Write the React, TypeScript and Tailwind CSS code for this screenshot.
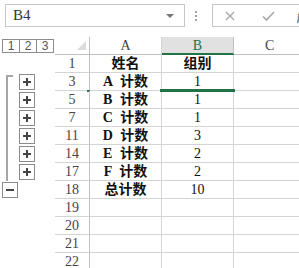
const GREEN = '#217346';

type Row = {
  n: string;
  a?: string;
  b?: string;
  bold?: boolean;
  outline?: 'top' | 'plus' | 'minus';
  selected?: boolean;
};

const rows: Row[] = [
  { n: '1', a: '姓名', b: '组别', bold: true },
  { n: '3', a: 'A 计数', b: '1', outline: 'top', selected: true },
  { n: '5', a: 'B 计数', b: '1', outline: 'plus' },
  { n: '7', a: 'C 计数', b: '1', outline: 'plus' },
  { n: '11', a: 'D 计数', b: '3', outline: 'plus' },
  { n: '14', a: 'E 计数', b: '2', outline: 'plus' },
  { n: '17', a: 'F 计数', b: '2', outline: 'plus' },
  { n: '18', a: '总计数', b: '10', outline: 'minus' },
  { n: '19' },
  { n: '20' },
  { n: '21' },
  { n: '22' },
];

function PlusBox() {
  return (
    <div className="relative mt-px w-[16px] h-[16px] border border-[#8c8c8c] bg-white flex items-center justify-center">
      <div className="absolute w-[8px] h-[2px] bg-[#444]" />
      <div className="absolute w-[2px] h-[8px] bg-[#444]" />
    </div>
  );
}

function OutlineCell({ kind }: { kind?: Row['outline'] }) {
  if (kind === 'top') {
    return (
      <div className="w-[55px] flex items-start">
        <div className="self-stretch ml-[6px] mt-[2px] w-[7px] border-l-2 border-t-2 border-[#a6a6a6]" />
        <div className="ml-[6px]">
          <PlusBox />
        </div>
      </div>
    );
  }
  if (kind === 'plus') {
    return (
      <div className="w-[55px] flex items-start">
        <div className="self-stretch ml-[6px] w-[2px] bg-[#a6a6a6]" />
        <div className="ml-[11px]">
          <PlusBox />
        </div>
      </div>
    );
  }
  if (kind === 'minus') {
    return (
      <div className="w-[55px] flex items-start">
        <div className="ml-[2px] mt-px w-[16px] h-[16px] border border-[#8c8c8c] bg-white flex items-center justify-center">
          <div className="w-[8px] h-[2px] bg-[#444]" />
        </div>
      </div>
    );
  }
  return <div className="w-[55px]" />;
}

export default function App() {
  return (
    <div
      className="relative w-[299px] h-[268px] overflow-hidden bg-white text-[#111]"
      style={{ fontFamily: '"Liberation Serif", "Noto Sans CJK SC", serif' }}
    >
      {/* Formula bar */}
      <div className="h-[37px] flex items-start pt-[4px]">
        <div className="ml-[5px] w-[180px] h-[23px] shrink-0 border border-[#c6c6c6] flex items-center pl-[7px] pr-[10px]">
          <span className="text-[15px] text-[#333]">B4</span>
          <div className="ml-auto w-0 h-0 border-l-[4px] border-r-[4px] border-t-[4px] border-l-transparent border-r-transparent border-t-[#777]" />
        </div>
        <div className="ml-[10px] mt-[7px] flex flex-col gap-[2px]">
          <div className="w-[2px] h-[2px] bg-[#a0a0a0]" />
          <div className="w-[2px] h-[2px] bg-[#a0a0a0]" />
          <div className="w-[2px] h-[2px] bg-[#a0a0a0]" />
        </div>
        <div className="ml-[15px] h-[23px] flex-1 min-w-0 border border-r-0 border-[#c6c6c6] flex items-center overflow-hidden">
          <svg className="ml-[12px] shrink-0" width="10" height="10" viewBox="0 0 10 10">
            <path d="M1 1L9 9M9 1L1 9" stroke="#a6a6a6" strokeWidth="1.3" fill="none" />
          </svg>
          <svg className="ml-[27px] shrink-0" width="13" height="10" viewBox="0 0 13 10">
            <path d="M1 5.5L4.5 9L12 1" stroke="#a6a6a6" strokeWidth="1.6" fill="none" />
          </svg>
          <span className="ml-[22px] shrink-0 text-[13px] italic text-[#555]">fx</span>
        </div>
      </div>

      {/* Column headers */}
      <div className="flex h-[18px]">
        <div className="w-[55px] pl-[2px] pt-[2px]">
          <div
            className="flex w-[52px] h-[14px] border border-[#8c8c8c] text-[12px] text-[#555] leading-none"
            style={{ fontFamily: '"Liberation Sans", sans-serif' }}
          >
            <div className="w-[16px] flex items-center justify-center">1</div>
            <div className="w-[17px] border-l border-[#8c8c8c] flex items-center justify-center">2</div>
            <div className="w-[17px] border-l border-[#8c8c8c] flex items-center justify-center">3</div>
          </div>
        </div>
        <div className="relative w-[35px] border-r border-b border-[#c0c0c0]">
          <div className="absolute right-[3px] bottom-[4px] w-0 h-0 border-l-[9px] border-b-[9px] border-l-transparent border-b-[#dcdcdc]" />
        </div>
        <div className="w-[72px] border-r border-b border-[#d4d4d4] border-b-[#c0c0c0] flex items-center justify-center text-[14px] text-[#444]">A</div>
        <div className="w-[72px] bg-[#e1e1e1] border-r border-[#c0c0c0] border-b-2 border-b-[#217346] flex items-center justify-center text-[14px] text-[#217346]">B</div>
        <div className="flex-1 border-b border-[#c0c0c0] flex items-center pl-[31px] text-[14px] text-[#444]">C</div>
      </div>

      {/* Rows */}
      {rows.map((r) => (
        <div key={r.n} className="flex h-[18px]">
          <OutlineCell kind={r.outline} />
          <div className="relative w-[35px] border-r border-b border-[#d4d4d4] border-r-[#c0c0c0] flex items-center justify-center text-[14px] text-[#444]">
            {r.n}
            {r.selected && <div className="absolute right-[-1px] bottom-[-2px] w-[3px] h-[2px] bg-[#217346]" />}
          </div>
          <div className={`w-[72px] border-r border-b border-[#d4d4d4] flex items-center justify-center text-[14px] [word-spacing:4px] ${r.a ? 'font-bold' : ''}`}>
            {r.a}
          </div>
          <div className={`relative w-[72px] border-r border-b border-[#d4d4d4] flex items-center justify-center text-[14px] ${r.bold ? 'font-bold' : ''}`}>
            {r.b}
            {r.selected && (
              <div className="absolute z-10 left-[-2px] right-[-2px] bottom-[-2px] h-[3px]" style={{ backgroundColor: GREEN }} />
            )}
          </div>
          <div className="flex-1 border-b border-[#d4d4d4]" />
        </div>
      ))}
    </div>
  );
}
